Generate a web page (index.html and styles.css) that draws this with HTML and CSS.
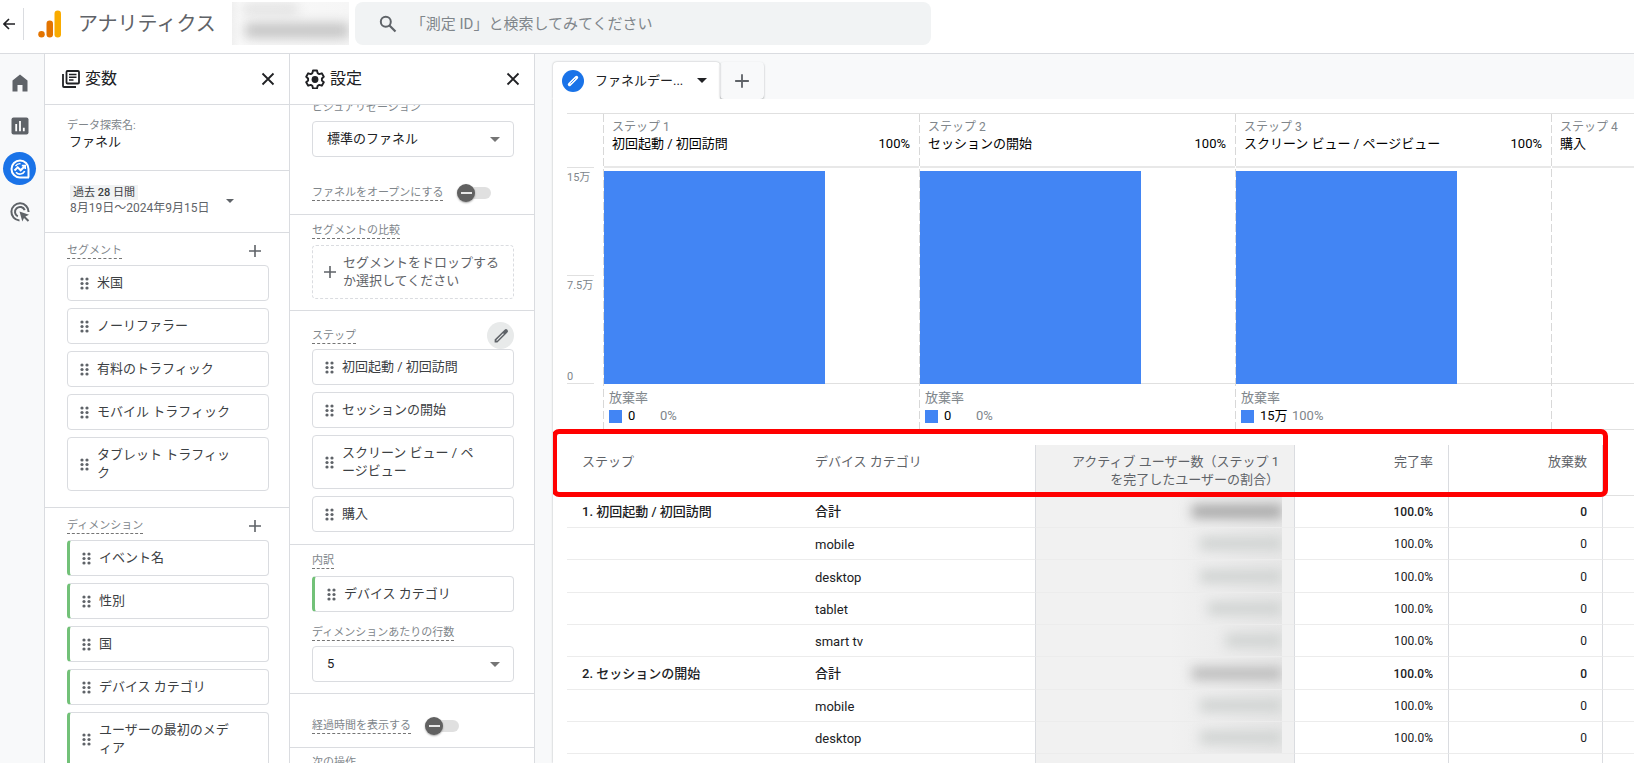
FILE: index.html
```html
<!DOCTYPE html>
<html lang="ja">
<head>
<meta charset="utf-8">
<title>アナリティクス</title>
<link rel="stylesheet" href="styles.css">
</head>
<body>
<svg class="sprite" aria-hidden="true">
  <symbol id="grip" viewBox="0 0 9 13"><circle cx="2" cy="2" r="1.6"/><circle cx="7" cy="2" r="1.6"/><circle cx="2" cy="6.5" r="1.6"/><circle cx="7" cy="6.5" r="1.6"/><circle cx="2" cy="11" r="1.6"/><circle cx="7" cy="11" r="1.6"/></symbol>
  <symbol id="plus" viewBox="0 0 14 14"><path d="M7 1v12M1 7h12" fill="none" stroke="currentColor" stroke-width="1.6"/></symbol>
  <symbol id="close" viewBox="0 0 14 14"><path d="M1.500 1.500l11 11M12.500 1.500l-11 11" fill="none" stroke="currentColor" stroke-width="1.8"/></symbol>
  <symbol id="caret" viewBox="0 0 10 5"><path d="M0 0h10L5 5z"/></symbol>
  <symbol id="pencil" viewBox="0 0 24 24"><path fill-rule="evenodd" d="M20.500 3.500a2.600 2.600 0 0 0-3.700 0L3.500 16.800v3.700h3.700L20.500 7.200a2.600 2.600 0 0 0 0-3.700zM14.800 8.300l1 1-8.900 8.900H5.900v-1z"/></symbol>
</svg>

<header class="topbar">
  <button class="back" aria-label="戻る"><svg width="12" height="12" viewBox="0 0 12 12"><path d="M6 1L1 6l5 5M1 6h11" fill="none" stroke="currentColor" stroke-width="1.6"/></svg></button>
  <svg class="logo" width="24" height="28" viewBox="0 0 24 28"><rect x="16.500" y="0.500" width="6.500" height="27" rx="3.250" fill="#f9ab00"/><rect x="8.500" y="10.500" width="6.500" height="17" rx="3.250" fill="#e37400"/><circle cx="3.500" cy="24.250" r="3.250" fill="#e37400"/></svg>
  <h1 class="brand">アナリティクス</h1>
  <div class="account" aria-hidden="true"><i class="smudge top"></i><i class="smudge bottom"></i></div>
  <label class="search">
    <svg width="18" height="18" viewBox="0 0 18 18"><circle cx="6.800" cy="6.800" r="5" fill="none" stroke="currentColor" stroke-width="2"/><path d="M10.500 10.500l6 6" stroke="currentColor" stroke-width="2.200"/></svg>
    <input type="search" placeholder="「測定 ID」と検索してみてください" aria-label="検索">
  </label>
</header>

<div class="shell">
  <nav class="rail">
    <a href="#" aria-label="ホーム"><svg width="24" height="24" viewBox="0 0 24 24"><path d="M4.500 20.500V9.500L12 3.500l7.500 6v11h-5v-6.500h-5v6.500z" fill="#5f6368"/></svg></a>
    <a href="#" aria-label="レポート"><svg width="24" height="24" viewBox="0 0 24 24"><rect x="3.500" y="3.500" width="17" height="17" rx="2" fill="#5f6368"/><path d="M8.200 10v7.200M12 7v10.200M15.800 13.800v3.400" stroke="#fff" stroke-width="1.800"/></svg></a>
    <a href="#" class="active" aria-label="データ探索"><svg width="24" height="24" viewBox="0 0 24 24" fill="none" stroke="#fff"><path d="M21 20.500h-9a8.500 8.500 0 1 1 8.500-8.500v8.500" stroke-width="2"/><path d="M6.500 13.500l3.200-3.200 3 3 4-4" stroke-width="2"/><path d="M13.800 8.600h3.400V12" stroke-width="1.600"/><path d="M8 15.200a5.200 5.200 0 0 0 8.700-1" stroke-width="1.600"/><path d="M7.500 9.200a5.200 5.200 0 0 1 5-2.500" stroke-width="1.400"/></svg></a>
    <a href="#" aria-label="広告"><svg width="24" height="24" viewBox="0 0 24 24" fill="none" stroke="#5f6368" stroke-width="2"><path d="M11.500 20.500A8.600 8.600 0 1 1 20.600 12"/><path d="M9.800 16.400A5 5 0 1 1 16.700 10.200"/><path d="M11.500 11.500l9.500 3.200-3.600 1.800 3.800 3.800-1.400 1.400-3.800-3.800-1.700 3.500z" fill="#5f6368" stroke="none"/></svg></a>
  </nav>

  <section class="panel">
    <header class="panel-head">
      <svg width="18" height="18" viewBox="0 0 18 18" fill="none" stroke="#202124"><rect x="4.500" y="1" width="12.500" height="12.500" rx="1" stroke-width="1.800"/><path d="M1 4v12a1 1 0 0 0 1 1h12" stroke-width="1.800"/><path d="M7 4.500h7.500M7 7.200h7.500M7 10h4.500" stroke-width="1.400"/></svg>
      <h2>変数</h2>
      <button aria-label="閉じる"><svg width="14" height="14"><use href="#close"/></svg></button>
    </header>
    <div class="name">
      <span class="plain-label">データ探索名:</span>
      <span class="value">ファネル</span>
    </div>
    <div class="date">
      <div class="range"><span class="preset">過去 <b>28</b> 日間</span><span>8月19日～2024年9月15日</span></div>
      <button aria-label="期間を変更"><svg width="8" height="4"><use href="#caret"/></svg></button>
    </div>
    <div class="group segments">
      <div class="group-head"><span class="label">セグメント</span><button aria-label="セグメントを追加"><svg width="14" height="14"><use href="#plus"/></svg></button></div>
      <ul class="chips">
        <li><svg width="9" height="13"><use href="#grip"/></svg><span>米国</span></li>
        <li><svg width="9" height="13"><use href="#grip"/></svg><span>ノーリファラー</span></li>
        <li><svg width="9" height="13"><use href="#grip"/></svg><span>有料のトラフィック</span></li>
        <li><svg width="9" height="13"><use href="#grip"/></svg><span>モバイル トラフィック</span></li>
        <li><svg width="9" height="13"><use href="#grip"/></svg><span>タブレット トラフィック</span></li>
      </ul>
    </div>
    <div class="group">
      <div class="group-head"><span class="label">ディメンション</span><button aria-label="ディメンションを追加"><svg width="14" height="14"><use href="#plus"/></svg></button></div>
      <ul class="chips green">
        <li><svg width="9" height="13"><use href="#grip"/></svg><span>イベント名</span></li>
        <li><svg width="9" height="13"><use href="#grip"/></svg><span>性別</span></li>
        <li><svg width="9" height="13"><use href="#grip"/></svg><span>国</span></li>
        <li><svg width="9" height="13"><use href="#grip"/></svg><span>デバイス カテゴリ</span></li>
        <li><svg width="9" height="13"><use href="#grip"/></svg><span>ユーザーの最初のメディア</span></li>
      </ul>
    </div>
  </section>

  <section class="panel">
    <header class="panel-head gear">
      <svg width="20" height="20" viewBox="0 0 20 20"><path d="M8 1.500h4l.6 2.600 1.700 1 2.500-.8 2 3.400-1.900 1.800v2l1.900 1.800-2 3.400-2.500-.8-1.700 1-.6 2.600H8l-.6-2.600-1.700-1-2.500.8-2-3.400 1.900-1.800v-2L1.200 7.700l2-3.400 2.500.8 1.700-1z" fill="none" stroke="#202124" stroke-width="1.900" stroke-linejoin="round"/><circle cx="10" cy="10.500" r="3.400" fill="#202124"/></svg>
      <h2>設定</h2>
      <button aria-label="閉じる"><svg width="14" height="14"><use href="#close"/></svg></button>
    </header>
    <div class="settings">
      <div class="block viz">
        <label class="plain-label" for="viz">ビジュアリゼーション</label>
        <div class="select"><select id="viz"><option>標準のファネル</option></select><svg width="10" height="5"><use href="#caret"/></svg></div>
        <div class="switch-row"><label class="label" for="open">ファネルをオープンにする</label><input class="switch" type="checkbox" id="open"></div>
      </div>
      <div class="block compare">
        <span class="label">セグメントの比較</span>
        <button class="drop"><svg width="14" height="14"><use href="#plus"/></svg><span>セグメントをドロップするか選択してください</span></button>
      </div>
      <div class="block steps">
        <div class="steps-head"><span class="label">ステップ</span><button aria-label="ステップを編集"><svg width="18" height="18"><use href="#pencil"/></svg></button></div>
        <ul class="chips">
          <li><svg width="9" height="13"><use href="#grip"/></svg><span>初回起動 / 初回訪問</span></li>
          <li><svg width="9" height="13"><use href="#grip"/></svg><span>セッションの開始</span></li>
          <li><svg width="9" height="13"><use href="#grip"/></svg><span>スクリーン ビュー / ページビュー</span></li>
          <li><svg width="9" height="13"><use href="#grip"/></svg><span>購入</span></li>
        </ul>
      </div>
      <div class="block breakdown">
        <span class="label">内訳</span>
        <ul class="chips green"><li><svg width="9" height="13"><use href="#grip"/></svg><span>デバイス カテゴリ</span></li></ul>
        <label class="label" for="rows">ディメンションあたりの行数</label>
        <div class="select"><select id="rows"><option>5</option></select><svg width="10" height="5"><use href="#caret"/></svg></div>
      </div>
      <div class="block elapsed">
        <div class="switch-row"><label class="label" for="time">経過時間を表示する</label><input class="switch" type="checkbox" id="time"></div>
      </div>
      <div class="block next"><span class="label">次の操作</span></div>
    </div>
  </section>

  <main class="canvas">
    <div class="tabs">
      <button class="tab"><span class="badge"><svg width="14" height="14" viewBox="0 0 14 14"><path d="M3.500 10.500l7-7" stroke="#fff" stroke-width="3.400" stroke-linecap="round"/><path d="M4.500 9.500l5-5" stroke="#1a73e8" stroke-width=".8"/></svg></span><span class="tab-name">ファネルデー...</span><svg width="10" height="5"><use href="#caret"/></svg></button>
      <button class="add-tab" aria-label="タブを追加"><svg width="16" height="16"><use href="#plus"/></svg></button>
    </div>
    <div class="report">
      <div class="chart">
        <div class="axis"><div class="axis-top"></div><div class="axis-half">15万</div><div class="axis-half mid"><span>7.5万</span><span>0</span></div></div>
        <div class="step">
          <div class="step-head"><small>ステップ 1</small><div><span>初回起動 / 初回訪問</span><span>100%</span></div></div>
          <div class="plot"><div class="bar"></div></div>
          <div class="drop-rate"><span>放棄率</span><div><i></i><b>0</b><em>0%</em></div></div>
        </div>
        <div class="step">
          <div class="step-head"><small>ステップ 2</small><div><span>セッションの開始</span><span>100%</span></div></div>
          <div class="plot"><div class="bar"></div></div>
          <div class="drop-rate"><span>放棄率</span><div><i></i><b>0</b><em>0%</em></div></div>
        </div>
        <div class="step">
          <div class="step-head"><small>ステップ 3</small><div><span>スクリーン ビュー / ページビュー</span><span>100%</span></div></div>
          <div class="plot"><div class="bar"></div></div>
          <div class="drop-rate"><span>放棄率</span><div><i></i><b>15万</b><em>100%</em></div></div>
        </div>
        <div class="step">
          <div class="step-head"><small>ステップ 4</small><div><span>購入</span></div></div>
          <div class="plot"></div>
          <div class="drop-rate"></div>
        </div>
      </div>
      <div class="table-wrap">
        <table>
          <colgroup><col class="c-step"><col class="c-device"><col class="c-users"><col class="c-num"><col class="c-num"><col></colgroup>
          <thead><tr><th>ステップ</th><th>デバイス カテゴリ</th><th class="users">アクティブ ユーザー数（ステップ 1<br>を完了したユーザーの割合）</th><th class="num">完了率</th><th class="num">放棄数</th><th class="rest"></th></tr></thead>
          <tbody>
            <tr class="total"><td>1. 初回起動 / 初回訪問</td><td>合計</td><td class="users"><div class="hidden-value w-l dark"><i></i></div></td><td class="num">100.0%</td><td class="num">0</td><td class="rest"></td></tr>
            <tr><td></td><td>mobile</td><td class="users"><div class="hidden-value w-m"><i></i></div></td><td class="num">100.0%</td><td class="num">0</td><td class="rest"></td></tr>
            <tr><td></td><td>desktop</td><td class="users"><div class="hidden-value w-m"><i></i></div></td><td class="num">100.0%</td><td class="num">0</td><td class="rest"></td></tr>
            <tr><td></td><td>tablet</td><td class="users"><div class="hidden-value w-s"><i></i></div></td><td class="num">100.0%</td><td class="num">0</td><td class="rest"></td></tr>
            <tr><td></td><td>smart tv</td><td class="users"><div class="hidden-value w-xs"><i></i></div></td><td class="num">100.0%</td><td class="num">0</td><td class="rest"></td></tr>
            <tr class="total"><td>2. セッションの開始</td><td>合計</td><td class="users"><div class="hidden-value w-l mid"><i></i></div></td><td class="num">100.0%</td><td class="num">0</td><td class="rest"></td></tr>
            <tr><td></td><td>mobile</td><td class="users"><div class="hidden-value w-m"><i></i></div></td><td class="num">100.0%</td><td class="num">0</td><td class="rest"></td></tr>
            <tr><td></td><td>desktop</td><td class="users last"><div class="hidden-value w-m"><i></i></div></td><td class="num">100.0%</td><td class="num">0</td><td class="rest"></td></tr>
            <tr><td></td><td></td><td class="users"></td><td class="num"></td><td class="num"></td><td class="rest"></td></tr>
          </tbody>
        </table>
        <div class="highlight"></div>
      </div>
    </div>
  </main>
</div>
</body>
</html>
```
FILE: styles.css
```css
* { box-sizing: border-box; }
body { margin: 0; height: 100vh; display: flex; flex-direction: column; overflow: hidden; background: #fff; color: #202124; font: 13px/18px Roboto, "Noto Sans CJK JP", sans-serif; }
h1, h2, ul { margin: 0; padding: 0; font-weight: 400; list-style: none; }
button { border: 0; padding: 0; background: none; color: inherit; font: inherit; display: flex; align-items: center; cursor: pointer; }
svg { flex: none; display: block; }
svg:not([fill]) { fill: currentColor; }
.sprite { position: absolute; width: 0; height: 0; }

/* Top bar */
.topbar { display: flex; align-items: center; height: 54px; flex: none; padding: 0 0 6px; border-bottom: 1px solid #dadce0; }
.back { height: 32px; width: 24px; padding-left: 3px; border-right: 1px solid #dadce0; }
.logo { margin-left: 14px; }
.brand { margin-left: 16px; font-size: 20px; line-height: 28px; color: #5f6368; white-space: nowrap; }
.account { width: 117px; height: 43px; margin-left: 16px; overflow: hidden; background: linear-gradient(90deg, #f0f0f0, #fafafa 8px, #f6f6f6); }
.smudge { display: block; background: #c4c4c4; filter: blur(6px); }
.smudge.top { width: 56px; height: 10px; margin: 2px 0 0 10px; opacity: .5; }
.smudge.bottom { width: 104px; height: 15px; margin: 9px 0 0 13px; }
.search { display: flex; align-items: center; width: 576px; height: 43px; margin-left: 6px; padding: 0 24px; gap: 14px; border-radius: 8px; background: #f1f3f4; color: #5f6368; }
.search input { flex: 1; min-width: 0; border: 0; padding: 0; background: none; outline: 0; font: 15px/20px Roboto, "Noto Sans CJK JP", sans-serif; }
.search input::placeholder { color: #80868b; opacity: 1; }

.shell { flex: 1; min-height: 0; display: flex; }

/* Rail */
.rail { width: 45px; flex: none; padding: 12px 5px 0 0; display: flex; flex-direction: column; align-items: center; gap: 10px; background: #f8f9fa; border-right: 1px solid #dadce0; }
.rail a { width: 33px; height: 33px; display: flex; align-items: center; justify-content: center; border-radius: 50%; }
.rail .active { background: #1a73e8; }

/* Panels */
.panel { width: 245px; flex: none; display: flex; flex-direction: column; overflow: hidden; border-right: 1px solid #dadce0; }
.panel-head { display: flex; align-items: center; height: 51px; flex: none; padding: 0 14px 1px 17px; gap: 5px; border-bottom: 1px solid #dadce0; background: #fff; position: relative; z-index: 1; }
.panel-head.gear { padding-left: 15px; }
.panel-head h2 { flex: 1; font-size: 16px; line-height: 24px; }
.plain-label, .label { padding-top: 2px; font-size: 11px; line-height: 14px; color: #80868b; display: block; width: max-content; }
.label { border-bottom: 1px dashed #757575; }
.name { padding: 12px 22px 19px; border-bottom: 1px solid #dadce0; }
.name .value { display: block; padding-left: 2px; }
.date { display: flex; align-items: center; padding: 14px 25px 16px; gap: 17px; border-bottom: 1px solid #dadce0; color: #5f6368; }
.range span { display: block; font-size: 12px; line-height: 16px; white-space: nowrap; }
.range .preset { width: max-content; padding: 0 3px; font-size: 11px; line-height: 15px; background: #f1f3f4; color: #3c4043; }
.preset b { font-weight: 500; font-size: 11px; }
.group { padding: 9px 20px 15px 22px; }
.group + .group { border-top: 1px solid #dadce0; }
.group-head { display: flex; justify-content: space-between; align-items: center; margin-bottom: 7px; padding-right: 7px; color: #5f6368; }
.segments { padding-bottom: 16px; }
.group .chips { margin-top: -1px; }
.chips { display: grid; gap: 7px; }
.chips li { display: flex; align-items: center; gap: 8px; padding: 8px 34px 8px 12px; border: 1px solid #dadce0; border-radius: 4px; background: #fff; color: #3c4043; }
.chips li svg { color: #5f6368; }
.chips li span { line-break: anywhere; }
.chips.green li { border-left: 3px solid #72c178; }

/* Settings */
.block { padding: 7px 20px 11px 22px; border-bottom: 1px solid #dadce0; }
.viz { padding: 0 20px 13px 22px; }
.viz > .plain-label { margin: -6px 0 6px; }
.select { position: relative; color: #757575; }
.select select { appearance: none; width: 100%; height: 36px; border: 1px solid #dadce0; border-radius: 4px; background: #fff; padding: 0 30px 0 14px; font: inherit; color: #202124; display: block; }
.select svg { position: absolute; right: 14px; top: 16px; pointer-events: none; }
.switch-row { display: flex; align-items: center; gap: 14px; }
.viz .switch-row { margin-top: 27px; }
.switch { appearance: none; margin: 0; width: 34px; height: 12px; border-radius: 6px; background: linear-gradient(90deg, transparent 9px, #e0e0e0 9px); display: flex; align-items: center; }
.switch::before { content: ""; width: 18px; height: 18px; flex: none; border-radius: 50%; background: linear-gradient(#e8e8e8, #e8e8e8) center / 11px 2px no-repeat #616161; box-shadow: 0 1px 2px rgba(0,0,0,.35); }
.drop { width: 100%; margin-top: 6px; padding: 8px 10px; gap: 6px; border: 1px dashed #dadce0; border-radius: 4px; color: #5f6368; text-align: left; }
.steps { padding-bottom: 12px; padding-top: 11px; }
.steps-head { display: flex; justify-content: space-between; align-items: center; height: 27px; }
.steps-head button { width: 27px; height: 27px; justify-content: center; border-radius: 50%; background: #e8eaea; color: #5f6368; }
.breakdown .chips { margin: 7px 0 12px; }
.breakdown .select { margin-top: 5px; }
.elapsed { padding: 23px 20px 13px 22px; }
.next { border: 0; padding-top: 6px; }

/* Canvas */
.canvas { flex: 1; min-width: 0; display: flex; flex-direction: column; padding: 8px 0 0 18px; background: #f8f9fa; overflow: hidden; }
.tabs { display: flex; flex: none; height: 37px; }
.tab { width: 167px; padding: 0 13px 0 9px; background: #fff; border-radius: 4px 4px 0 0; box-shadow: 0 0 2px rgba(60,64,67,.4); }
.badge { width: 22px; height: 22px; border-radius: 50%; background: #1a73e8; display: flex; align-items: center; justify-content: center; }
.tab-name { flex: 1; margin-left: 11px; text-align: left; white-space: nowrap; }
.add-tab { width: 44px; justify-content: center; border-radius: 4px; box-shadow: 0 1px 2px rgba(60,64,67,.4); color: #5f6368; }
.report { flex: 1; min-height: 0; background: #fff; box-shadow: 0 0 2px rgba(60,64,67,.35); clip-path: inset(0 0 0 -3px); padding: 14px 0 0 14px; overflow: hidden; }
.chart { display: grid; grid-template-columns: 36px repeat(4, 316px); height: 317px; border-top: 1px solid #e0e0e0; border-bottom: 1px solid #e0e0e0; }
.axis { width: 27px; font-size: 11px; line-height: 16px; color: #80868b; }
.axis-top { height: 53px; }
.axis-half { height: 108px; padding-top: 2px; border-top: 1px solid #e0e0e0; }
.axis-half.mid { height: 109px; border-bottom: 1px solid #e0e0e0; display: flex; flex-direction: column; justify-content: space-between; white-space: nowrap; }
.axis-half.mid span:last-child { line-height: 12px; }
.step { padding-left: 1px; background: repeating-linear-gradient(#d8d8d8 0 8px, transparent 8px 11px) left / 1px 100% no-repeat; }
.step-head { height: 54px; padding: 5px 9px 0 8px; border-bottom: 2px solid #e8e8e8; }
.step-head small { display: block; font-size: 12px; line-height: 16px; color: #80868b; }
.step-head div { display: flex; justify-content: space-between; color: #000; }
.plot { height: 216px; padding-top: 3px; border-bottom: 1px solid #e0e0e0; }
.bar { width: 70%; height: 213px; background: #4285f4; }
.drop-rate { padding: 5px 5px 0; color: #80868b; }
.drop-rate div { display: flex; align-items: center; }
.drop-rate i { width: 13px; height: 13px; background: #4285f4; }
.drop-rate b, .drop-rate em { font-weight: 400; font-style: normal; }
.drop-rate b { min-width: 32px; margin-left: 6px; color: #000; }

/* Table */
.table-wrap { position: relative; padding-top: 15px; }
table { width: 100%; table-layout: fixed; border-collapse: separate; border-spacing: 0; }
.c-step { width: 233px; }
.c-device { width: 235px; }
.c-users { width: 260px; }
.c-num { width: 154px; }
th, td { padding: 0 15px; text-align: left; font-weight: 400; border-bottom: 1px solid #ececec; white-space: nowrap; }
th { height: 51px; padding-top: 8px; vertical-align: top; color: #5f6368; border-bottom-color: #e0e0e0; }
td { height: 32px; padding-top: 3px; }
tr:nth-child(3n) td { height: 33px; }
.total td { padding-top: 1px; font-weight: 500; color: #202124; }
.users { background: #f1f1f1; border-left: 1px solid #dadce0; border-right: 1px solid #dadce0; text-align: right; }
.num { border-right: 1px solid #dadce0; text-align: right; }
td.num { font-size: 12px; padding-top: 1px; }
tbody td.users { padding: 0 12px 0 0; background: linear-gradient(90deg, #f1f1f1, #e7e7e7) right 12px top / 112px 100% no-repeat #f1f1f1; }
tbody tr:last-child td.users { background: #f1f1f1; }
.hidden-value { width: 112px; height: 31px; margin-left: auto; display: flex; align-items: center; justify-content: flex-end; overflow: hidden; }
.hidden-value i { height: 13px; background: #d0d3d2; filter: blur(6px); }
.hidden-value.dark i { background: #a6a6a6; }
.hidden-value.mid i { background: #bcbcbc; }
.w-l i { width: 90px; }
.w-m i { width: 82px; }
.w-s i { width: 74px; }
.w-xs i { width: 56px; }
.highlight { position: absolute; left: -15px; right: 26px; top: -1px; height: 68px; border: 5px solid #f00; border-radius: 7px; pointer-events: none; }
```
